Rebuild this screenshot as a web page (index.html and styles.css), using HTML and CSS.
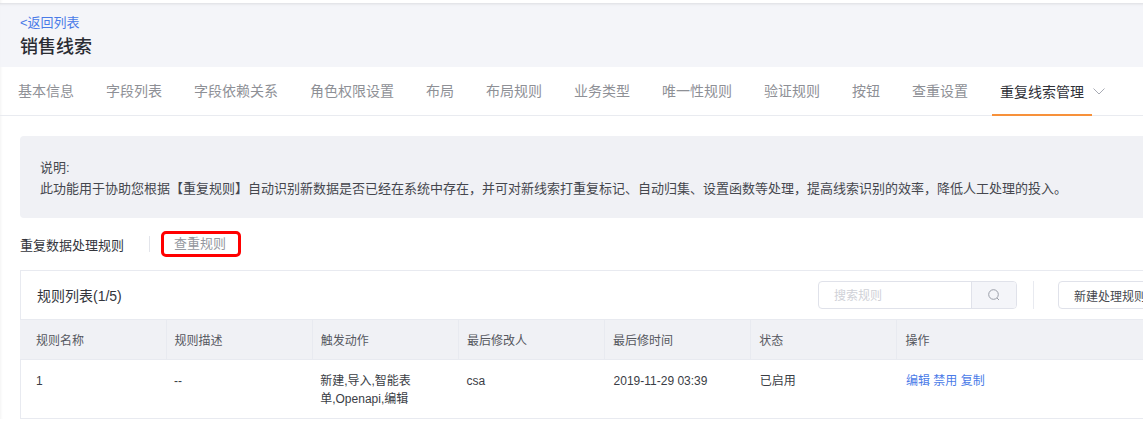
FILE: index.html
```html
<!DOCTYPE html>
<html lang="zh-CN">
<head>
  <meta charset="UTF-8" />
  <title>销售线索</title>
  <link rel="stylesheet" href="styles.css">
</head>
<body>
  <div class="page">
    <header class="head">
      <a class="back" href="#">&lt;返回列表</a>
      <h1>销售线索</h1>
    </header>

    <nav class="tabs">
      <a href="#">基本信息</a>
      <a href="#">字段列表</a>
      <a href="#">字段依赖关系</a>
      <a href="#">角色权限设置</a>
      <a href="#">布局</a>
      <a href="#">布局规则</a>
      <a href="#">业务类型</a>
      <a href="#">唯一性规则</a>
      <a href="#">验证规则</a>
      <a href="#">按钮</a>
      <a href="#">查重设置</a>
      <a class="active" href="#">重复线索管理</a>
      <svg class="chevron" width="12" height="7" viewBox="0 0 12 7"><path d="M.5.5l5.5 5.5 5.5-5.5" fill="none" stroke="#a8abb4" stroke-width="1"/></svg>
    </nav>

    <section class="content">
      <div class="notice">
        <p>说明:</p>
        <p class="notice-text">此功能用于协助您根据【重复规则】自动识别新数据是否已经在系统中存在，并可对新线索打重复标记、自动归集、设置函数等处理，提高线索识别的效率，降低人工处理的投入。</p>
      </div>

      <div class="subtabs">
        <span class="subtab-on">重复数据处理规则</span>
        <i class="sep"></i>
        <span class="subtab-off">查重规则</span>
      </div>

      <div class="card">
        <div class="toolbar">
          <span class="card-title">规则列表(1/5)</span>
          <div class="search">
            <span class="search-input">搜索规则</span>
            <span class="search-btn">
              <svg width="14" height="14" viewBox="0 0 14 14"><circle cx="6.5" cy="6.5" r="4.8" fill="none" stroke="#9a9ea8" stroke-width="1"/><path d="M10 10l2 2" stroke="#9a9ea8" stroke-width="1"/></svg>
            </span>
          </div>
          <i class="tool-sep"></i>
          <button class="new-btn">新建处理规则</button>
        </div>

        <table class="rules">
          <thead>
            <tr>
              <th>规则名称</th><th>规则描述</th><th>触发动作</th><th>最后修改人</th><th>最后修时间</th><th>状态</th><th class="ops">操作</th>
            </tr>
          </thead>
          <tbody>
            <tr>
              <td>1</td>
              <td>--</td>
              <td>新建,导入,智能表单,Openapi,编辑</td>
              <td>csa</td>
              <td>2019-11-29 03:39</td>
              <td>已启用</td>
              <td class="ops"><a href="#">编辑</a> <a href="#">禁用</a> <a href="#">复制</a></td>
            </tr>
          </tbody>
        </table>
      </div>
    </section>
  </div>
</body>
</html>
```

FILE: styles.css
```css
* { box-sizing: border-box; }
html, body { margin: 0; height: 100%; overflow: hidden; }
body { font-family: "Liberation Sans", "Noto Sans CJK SC", sans-serif; font-size: 12px; color: #3a3d45; background: #fff; }
a { text-decoration: none; }

.page { width: 1240px; padding-top: 3px; box-shadow: inset 3px 0 3px -2px rgba(0,0,0,0.05); }

.head { height: 64px; padding: 11px 20px 0; background: #f4f5f9; box-shadow: inset 0 3px 3px -2px rgba(0,0,0,0.1); }
.back { display: block; line-height: 17px; color: #4a7be8; font-size: 13px; }
.head h1 { margin: 3px 0 0; font-size: 18px; line-height: 26px; font-weight: 500; color: #2a2c33; }

.tabs { display: flex; align-items: center; gap: 16px; height: 49px; padding: 0 0 0 10px; border-bottom: 1px solid #e9ebf0; }
.tabs a { display: flex; align-items: center; height: 49px; padding: 0 8px; font-size: 14px; color: #8e9096; border-bottom: 2px solid transparent; }
.tabs a.active { width: 100px; color: #2f3138; border-bottom-color: #f7913a; margin-bottom: -1px; }
.chevron { margin-left: -15px; }

.content { padding: 20px 0 0 20px; }
.notice { height: 82px; padding: 22px 20px 0; background: #f0f1f5; border-radius: 4px; line-height: 20px; font-size: 13px; color: #45474e; }
.notice p { margin: 0; }
.notice .notice-text { margin-top: 1px; white-space: nowrap; }

.subtabs { display: flex; align-items: center; height: 26px; margin-top: 13px; font-size: 13px; }
.subtab-on { color: #33353c; }
.sep { width: 1px; height: 16px; margin: 0 12px 0 25px; background: #e3e5eb; }
.subtab-off { width: 80px; height: 26px; margin-left: -1px; padding-right: 2px; line-height: 20px; text-align: center; border: 3px solid #f00; border-radius: 5px; color: #94979e; }

.card { margin-top: 13px; border: 1px solid #e8eaf0; border-bottom: none; border-right: none; }
.toolbar { display: flex; align-items: center; height: 48px; padding: 0 0 0 16px; }
.card-title { width: 781px; font-size: 14px; color: #33353c; }
.search { display: flex; width: 199px; height: 28px; border: 1px solid #e0e2ea; border-radius: 4px; }
.search-input { width: 153px; padding-left: 15px; line-height: 28px; color: #cfd1d7; border-right: 1px solid #e0e2ea; }
.search-btn { flex: 1; display: flex; align-items: center; justify-content: center; background: #f4f5f9; border-radius: 0 3px 3px 0; }
.tool-sep { width: 1px; height: 28px; margin: 0 24px 0 16px; background: #e8eaf0; }
.new-btn { width: 120px; height: 28px; padding: 0 15px; text-align: left; border: 1px solid #e0e2ea; border-radius: 4px; background: #fff; font: inherit; color: #45474e; }

.rules { width: 1220px; margin-left: -1px; border-collapse: collapse; table-layout: fixed; }
.rules th, .rules td { padding: 0 8px; text-align: left; font-weight: 400; }
.rules th { width: 146.2px; height: 40px; background: #f0f1f5; color: #55575e; border-top: 1px solid #e8eaf0; border-bottom: 1px solid #e8eaf0; border-left: 1px solid #e8eaf0; }
.rules th:first-child { width: 146px; padding-left: 16px; border-left: none; }
.rules th.ops { width: 346px; }
.rules td { height: 59px; padding-top: 12px; padding-bottom: 9px; line-height: 18px; vertical-align: top; color: #3a3d45; border-bottom: 1px solid #e8eaf0; }
.rules td:first-child { padding-left: 16px; }
.rules td:nth-child(n+5) { padding-left: 9px; }
.rules td a { color: #4a7be8; }
```
